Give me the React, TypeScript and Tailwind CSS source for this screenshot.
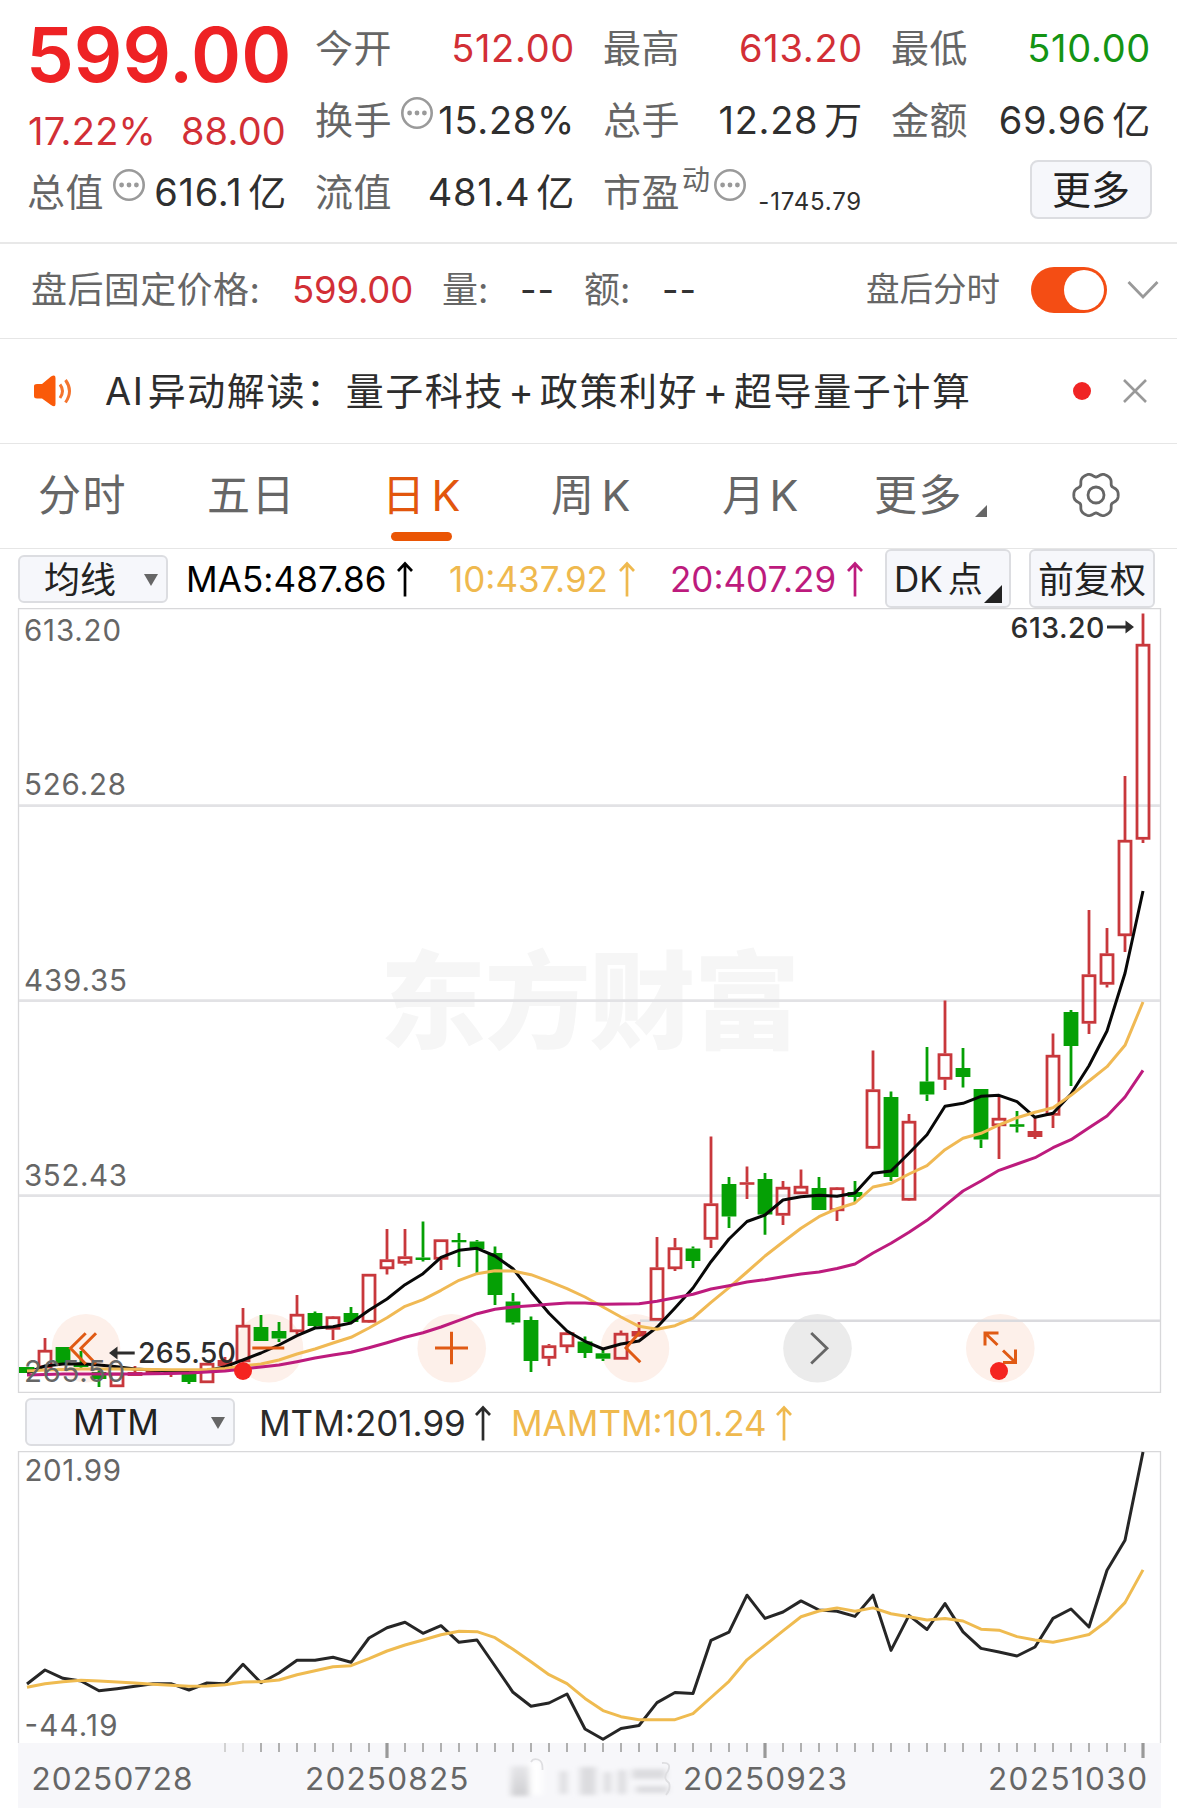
import React from "react";

const X0 = 27;
const STEP = 18;

type Candle = [kind: "r" | "g" | "f", high: number, top: number, bottom: number, low: number];

/* r = hollow rising bar, f = solid rising bar, g = falling bar */
const candles: Candle[] = [
  ["g", 1367, 1367, 1373, 1373],
  ["r", 1338, 1350, 1368, 1368],
  ["g", 1347, 1347, 1364, 1364],
  ["g", 1351, 1364, 1367, 1368],
  ["g", 1369, 1372, 1379, 1387],
  ["r", 1373, 1373, 1387, 1387],
  ["f", 1366, 1372, 1376, 1376],
  ["f", 1371, 1371, 1374, 1374],
  ["f", 1370, 1371, 1373, 1377],
  ["g", 1372, 1373, 1382, 1384],
  ["r", 1363, 1363, 1383, 1383],
  ["f", 1357, 1360, 1366, 1367],
  ["r", 1308, 1325, 1362, 1362],
  ["g", 1315, 1327, 1341, 1341],
  ["g", 1322, 1331, 1338.5, 1342],
  ["r", 1295, 1314, 1332, 1334],
  ["g", 1311.5, 1313, 1326, 1327],
  ["r", 1316, 1316.5, 1329.5, 1340],
  ["g", 1307, 1313, 1322, 1323],
  ["r", 1274, 1274, 1322.5, 1323],
  ["r", 1229, 1259.5, 1269, 1274.5],
  ["r", 1229, 1256.5, 1263.5, 1265.5],
  ["g", 1221.5, 1257.5, 1260, 1261.5],
  ["r", 1239.5, 1239.5, 1259.5, 1270],
  ["g", 1233, 1240, 1242.3, 1267],
  ["g", 1240, 1241.5, 1249, 1273],
  ["g", 1246.5, 1253, 1295, 1305],
  ["g", 1293, 1301.5, 1322.5, 1324.5],
  ["g", 1316.5, 1320, 1361, 1372],
  ["r", 1344, 1345.5, 1358.5, 1366],
  ["r", 1331.5, 1332.5, 1347, 1353],
  ["g", 1336.5, 1341.5, 1353, 1358],
  ["g", 1349, 1353.3, 1358.7, 1361],
  ["r", 1330.5, 1333, 1359.5, 1359.5],
  ["f", 1322, 1331, 1336.5, 1337],
  ["r", 1237, 1267.5, 1320.5, 1320.5],
  ["r", 1238, 1247.5, 1269, 1271],
  ["g", 1246.5, 1248.5, 1261, 1268],
  ["r", 1136.5, 1203.5, 1239.5, 1248],
  ["g", 1177, 1184, 1216.5, 1228],
  ["f", 1166.5, 1182.2, 1184.8, 1199],
  ["g", 1173, 1179, 1214.5, 1234.7],
  ["r", 1181, 1187, 1215.5, 1225],
  ["r", 1169.5, 1186, 1194, 1194],
  ["g", 1177, 1188, 1210, 1210],
  ["r", 1187, 1187.5, 1211, 1221],
  ["g", 1181, 1192, 1197, 1202],
  ["r", 1050.5, 1089.5, 1148.5, 1149],
  ["g", 1091.5, 1097, 1177, 1181],
  ["r", 1114, 1121, 1200.5, 1201],
  ["g", 1047, 1081.5, 1094.5, 1101],
  ["r", 1000.5, 1053.5, 1079.5, 1090],
  ["g", 1048, 1068, 1077, 1087.5],
  ["g", 1089, 1089, 1139.5, 1148],
  ["r", 1097, 1118, 1126, 1159],
  ["g", 1111, 1124.2, 1126.8, 1132.5],
  ["f", 1118, 1131, 1137, 1139],
  ["r", 1033.5, 1055, 1115.5, 1128],
  ["g", 1010, 1012, 1046, 1086],
  ["r", 910, 974.5, 1023.5, 1034],
  ["r", 928, 953.5, 984.5, 987.5],
  ["r", 776, 840, 936, 952],
  ["r", 613.5, 644, 839.5, 843],
];

const ma5 = [
  1373, 1366, 1364, 1363.7, 1365, 1366.7, 1369, 1370, 1371, 1372, 1370.7, 1366.7, 1360, 1353, 1345, 1335.7, 1328, 1326.7,
  1323, 1310.3, 1299, 1284.7, 1273.7, 1257.3, 1250.3, 1248.3, 1256, 1268.7, 1291.7, 1313.3, 1331, 1341.3, 1349, 1344,
  1341, 1327.3, 1308, 1288, 1261.7, 1239, 1221.5, 1215, 1200, 1196.7, 1195.3, 1196.3, 1193, 1173.3, 1171, 1153.3, 1134.7,
  1106.3, 1103.3, 1096.3, 1095.3, 1101.7, 1117.3, 1113.3, 1094, 1065.7, 1031, 973.3, 891,
];
const ma10 = [
  1371, 1370, 1369.5, 1369, 1369, 1369, 1369.3, 1369.5, 1369.7, 1369.7, 1369.5, 1368.5, 1365.7, 1364, 1360, 1354, 1349,
  1343, 1337.3, 1328, 1317.7, 1306.3, 1299.7, 1290.3, 1280.3, 1273.7, 1270.7, 1271, 1274.7, 1281.3, 1288.7, 1297, 1307,
  1317, 1326.3, 1329.3, 1325.7, 1318, 1302.3, 1287.7, 1272, 1256, 1242, 1228.3, 1216.7, 1208.7, 1203, 1187, 1183.3, 1174,
  1165.7, 1149.7, 1138.3, 1133.3, 1125, 1117.7, 1112.3, 1107.7, 1095.3, 1081, 1066.7, 1045.3, 1002,
];
const ma20 = [
  1375, 1374.5, 1374, 1374, 1374, 1374, 1374, 1373.7, 1373.5, 1373, 1372, 1371, 1369, 1367, 1365, 1361.7, 1358, 1355,
  1352.3, 1347.7, 1342.7, 1337.3, 1332.7, 1327, 1320.3, 1313.7, 1309.3, 1307, 1305.7, 1304.3, 1303, 1303, 1304.3, 1304,
  1303.7, 1301.3, 1297.7, 1294.3, 1289, 1285.7, 1282, 1279.7, 1276.7, 1274, 1272, 1268.5, 1264, 1253, 1243.3, 1232.3,
  1220.3, 1205.7, 1191, 1181, 1170.3, 1164, 1157.7, 1147.7, 1139.7, 1127.7, 1116, 1097, 1070.3,
];
const mtm = [
  1684, 1670, 1678.3, 1681, 1690.7, 1688.7, 1686.3, 1683.7, 1683.7, 1690, 1683, 1683.7, 1664.3, 1682.7, 1673, 1660.3,
  1660.3, 1657.3, 1662.3, 1638, 1627.7, 1622.3, 1633.3, 1625.7, 1642.3, 1640, 1666, 1692.3, 1706.3, 1703, 1694, 1729,
  1739.3, 1728.5, 1725.5, 1702.6, 1692.5, 1693.5, 1640.3, 1632.2, 1595.2, 1618.4, 1612, 1600.9, 1610, 1611.3, 1616.4,
  1595.2, 1650.4, 1615.4, 1629.5, 1603.6, 1631.9, 1648.4, 1652, 1656, 1647, 1618.4, 1609, 1627, 1570.2, 1540.3, 1452,
];
const mamtm = [
  1687.3, 1683.7, 1681.7, 1680.3, 1681, 1682, 1683, 1684.3, 1685.3, 1686.3, 1686, 1684.7, 1682, 1681.7, 1680, 1674.7,
  1670.7, 1666.7, 1665.7, 1658.7, 1651, 1645, 1640, 1634.7, 1631.3, 1631.7, 1637.7, 1649.3, 1661.7, 1674.7, 1683.7,
  1698.4, 1710.6, 1716.7, 1719.7, 1719.7, 1719.7, 1713.7, 1697.5, 1681.3, 1659.8, 1645.3, 1630.8, 1616.7, 1611, 1607.9,
  1611.3, 1607.9, 1613.7, 1616.7, 1620, 1618.4, 1621, 1629.2, 1630.2, 1636.6, 1640, 1642.3, 1638.6, 1634.5, 1621, 1602.6,
  1569.9,
];

const line = (ys: number[]) => ys.map((y, i) => `${X0 + i * STEP},${y}`).join(" ");

function Dots() {
  return (
    <svg className="size-8 shrink-0" viewBox="0 0 32 32" fill="none">
      <circle cx="16" cy="16" r="14.7" stroke="#9a9a9a" strokeWidth="2.6" />
      <circle cx="8.6" cy="16" r="2.4" fill="#9a9a9a" />
      <circle cx="16" cy="16" r="2.4" fill="#9a9a9a" />
      <circle cx="23.4" cy="16" r="2.4" fill="#9a9a9a" />
    </svg>
  );
}

function Up() {
  return (
    <svg className="mb-px h-9 w-4 shrink-0" viewBox="0 0 16 36" fill="none" stroke="currentColor" strokeWidth="2.7">
      <path d="M8 35.5V2.5M1 10L8 2.5L15 10" />
    </svg>
  );
}

function Gear() {
  const pts: string[] = [];
  for (let a = 0; a < 360; a += 3) {
    const t = (a * Math.PI) / 180;
    const r = 20.6 + 2.1 * Math.cos(6 * t) - 0.5 * Math.cos(12 * t);
    pts.push(`${(25 + r * Math.cos(t)).toFixed(2)},${(25 + r * Math.sin(t)).toFixed(2)}`);
  }
  return (
    <svg className="size-[50px]" viewBox="0 0 50 50" fill="none" stroke="#666" strokeWidth="2.8" strokeLinejoin="round">
      <polygon points={pts.join(" ")} />
      <circle cx="25" cy="25" r="8" />
    </svg>
  );
}

type FieldProps = { label: string; value: string; unit?: string; tone?: string; icon?: boolean };

function Field({ label, value, unit, tone = "", icon }: FieldProps) {
  return (
    <div className="flex h-[72px] items-center">
      <span className="-ml-px whitespace-nowrap tracking-[0.5px] text-[#666]">{label}</span>
      {icon && (
        <span className="-mr-3 -mt-3.5 ml-[9px]">
          <Dots />
        </span>
      )}
      <span className={"-mr-px ml-auto whitespace-nowrap tracking-[0.7px] " + tone}>
        {value}
        {unit && <span className="ml-1.5">{unit}</span>}
      </span>
    </div>
  );
}

function Header() {
  return (
    <header className="grid h-[244px] grid-cols-[258px_258px_258px_258px] grid-rows-[72px_72px_72px] gap-x-[30px] border-b-2 border-[#e8e8e8] pl-[28px] pt-3 text-[38px] leading-none text-[#2f2f2f]">
      <div className="row-span-2">
        <div className="-ml-0.5 flex h-[84px] items-center whitespace-nowrap text-[76px] font-semibold text-[#ee2224]">599.00</div>
        <div className="mt-[5px] flex h-[60px] items-center justify-between whitespace-nowrap text-[#d22f36]">
          <span className="tracking-[0.2px]">17.22%</span>
          <span className="tracking-[0.2px]">88.00</span>
        </div>
      </div>
      <Field label="今开" value="512.00" tone="text-[#d22f36]" />
      <Field label="最高" value="613.20" tone="text-[#d22f36]" />
      <Field label="最低" value="510.00" tone="text-[#149414]" />
      <Field label="换手" value="15.28%" icon />
      <Field label="总手" value="12.28" unit="万" />
      <Field label="金额" value="69.96" unit="亿" />
      <Field label="总值" value="616.1" unit="亿" icon />
      <Field label="流值" value="481.4" unit="亿" />
      <div className="flex h-[72px] items-center whitespace-nowrap">
        <span className="-ml-px tracking-[0.5px] text-[#666]">市盈</span>
        <span className="-mt-6 ml-0.5 mr-[4px] text-[28px] text-[#666]">动</span>
        <span className="-mt-3.5">
          <Dots />
        </span>
        <span className="ml-auto mt-5 text-2xl leading-none tracking-[0.8px]">-1745.79</span>
      </div>
      <div className="flex h-[72px] items-center justify-end">
        <button className="-mr-0.5 -mt-1.5 h-[59px] w-[122px] rounded-lg border-2 border-[#dcdde1] bg-[#f6f7fb] text-[39px] leading-none text-[#222]">更多</button>
      </div>
    </header>
  );
}

function AfterHours() {
  return (
    <section className="flex h-[95px] items-center whitespace-nowrap border-b border-[#e6e6e6] pb-[2px] pl-[31px] text-4xl leading-none text-[#666]">
      <span className="w-[261px] tracking-[0.4px]">盘后固定价格:</span>
      <span className="w-[150px] text-[36.500px] leading-none tracking-[-0.2px] text-[#d22f36]">599.00</span>
      <span className="w-[78px]">量:</span>
      <span className="w-[64px] tracking-[1px] text-[#333]">--</span>
      <span className="w-[78px]">额:</span>
      <span className="tracking-[1px] text-[#333]">--</span>
      <div className="ml-auto mr-[18px] flex items-center">
        <span className="text-[33.500px] leading-none">盘后分时</span>
        <span className="ml-[31px] flex h-[46px] w-[76px] items-center justify-end rounded-full bg-[#f44d14] pr-[3px]">
          <span className="size-10 rounded-full bg-white" />
        </span>
        <svg className="ml-5 h-5 w-8" viewBox="0 0 32 20" fill="none" stroke="#999" strokeWidth="2.8">
          <path d="M1.5 2L16 17L30.500 2" />
        </svg>
      </div>
    </section>
  );
}

function Notice() {
  return (
    <section className="flex h-[105px] items-center border-b border-[#e6e6e6] pb-px pl-[33px] pr-[30px]">
      <svg className="h-9 w-10" viewBox="0 0 40 36" fill="none">
        <path d="M1 13Q1 11 4 11H9L18 3.500Q22.500 1 22.500 5V31Q22.500 35 18 32L9 25.500H4Q1 25.500 1 23Z" fill="#fa5a0a" />
        <path d="M27 11.500Q32 18 27 25M32.500 7Q40.500 18 32.500 29.500" stroke="#f4742e" strokeWidth="3" />
      </svg>
      <p className="ml-8 whitespace-nowrap text-[38px] leading-none tracking-[1.6px] text-[#2d2d2d]">
        <span className="mr-[3px]">AI</span>异动解读：量子科技<span className="mx-[4.500px]">+</span>政策利好
        <span className="mx-[4.500px]">+</span>超导量子计算
      </p>
      <span className="ml-auto size-[18px] rounded-full bg-[#f02424]" />
      <svg className="ml-8 size-6" viewBox="0 0 24 24" stroke="#999" strokeWidth="2.6">
        <path d="M1 1L23 23M23 1L1 23" />
      </svg>
    </section>
  );
}

function Tabs() {
  return (
    <nav className="flex h-[105px] items-center whitespace-nowrap border-b border-[#e6e6e6] pb-0.5 pl-[38px] text-[43px] leading-none tracking-[1.5px] text-[#666]">
      <span className="w-[169px]">分时</span>
      <span className="w-[175px]">五日</span>
      <span className="relative w-[169px] text-[#e2560d]">
        日<span className="ml-[5px]">K</span>
        <span className="absolute left-[9px] top-[58px] h-[9px] w-[61px] rounded-full bg-[#ea5504]" />
      </span>
      <span className="w-[171px]">
        周<span className="ml-1.5">K</span>
      </span>
      <span className="w-[152px]">
        月<span className="ml-[3px]">K</span>
      </span>
      <span>更多</span>
      <svg className="ml-3 mt-8 size-3" viewBox="0 0 12 12">
        <path d="M12 0V12H0Z" fill="#666" />
      </svg>
      <span className="ml-[84px]">
        <Gear />
      </span>
    </nav>
  );
}

function MaBar() {
  return (
    <div className="flex h-[59px] items-center whitespace-nowrap pl-[18px] text-[35px] leading-none">
      <div className="flex h-12 w-[150px] items-center justify-between rounded-md border-2 border-[#dcdde1] bg-[#f6f7fb] pl-6 pr-2 pt-0.5 text-4xl leading-none text-[#222]">
        均线
        <svg className="h-3 w-3.5" viewBox="0 0 14 12">
          <path d="M0 0H14L7 12Z" fill="#666" />
        </svg>
      </div>
      <div className="ml-[18px] flex w-[263px] items-center gap-[11px] pt-0.5 tracking-[0.1px] text-black">
        MA5:487.86 <Up />
      </div>
      <div className="flex w-[221px] items-center gap-[11px] pt-0.5 text-[#efb94e]">
        10:437.92 <Up />
      </div>
      <div className="flex w-[215px] items-center gap-[11px] pt-0.5 text-[#bd1b7d]">
        20:407.29 <Up />
      </div>
      <div className="relative flex h-[59px] w-[126px] items-center rounded-md border-2 border-[#dcdde1] bg-[#f6f7fb] pl-[7px] pt-0.5 text-[#222]">
        DK<span className="ml-[5px]">点</span>
        <svg className="absolute bottom-[3px] right-[7px] size-[18px]" viewBox="0 0 18 18">
          <path d="M18 0V18H0Z" fill="#222" />
        </svg>
      </div>
      <div className="ml-[18px] flex h-[59px] w-[126px] items-center justify-center rounded-md border-2 border-[#dcdde1] bg-[#f6f7fb] pt-0.5 text-4xl leading-none text-[#222]">前复权</div>
    </div>
  );
}

function CandleShape({ c, i }: { c: Candle; i: number }) {
  const [kind, high, top, bottom, low] = c;
  const x = X0 + i * STEP;
  const color = kind === "g" ? "#05a005" : "#c8383c";
  const left = i === 0 ? 19 : x - 7.4;
  return (
    <g stroke={color} strokeWidth="2.8">
      <path d={`M${x} ${high}V${top}M${x} ${bottom}V${low}`} />
      {kind === "r" ? (
        <rect x={x - 6} y={top + 1.2} width="12" height={bottom - top - 2.4} fill="none" />
      ) : (
        <rect x={left} y={top} width={x + 7.4 - left} height={bottom - top} fill={color} stroke="none" />
      )}
    </g>
  );
}

function KChart() {
  return (
    <svg className="block h-[785px] w-full" viewBox="0 608 1177 785" fontFamily="Inter, sans-serif" fill="none">
      <path d="M18.500 608.500H1160.500V1392.300H18.500Z" stroke="#d8d8da" strokeWidth="1.3" />
      <text x="380" y="1040" textLength="420" fontFamily="'Noto Sans CJK SC', sans-serif" fontSize="106" fontWeight="900" fill="#f6f6f6">
        东方财富
      </text>
      <g stroke="#e2e2e5" strokeWidth="2.8">
        <path d="M19 805.700H1160M19 1000.700H1160M19 1195.700H1160" />
      </g>
      <g fill="#fdf0ea">
        <circle cx="86" cy="1348.300" r="34.300" />
        <circle cx="269" cy="1348.300" r="34.300" />
        <circle cx="451.700" cy="1348.300" r="34.300" />
        <circle cx="635" cy="1348.300" r="34.300" />
        <circle cx="817.500" cy="1348.300" r="34.300" fill="#ebebeb" />
        <circle cx="1000.300" cy="1348.300" r="34.300" />
      </g>
      <path d="M640 1320.700H1160" stroke="#dadade" strokeWidth="2.400" />
      {candles.map((c, i) => (
        <CandleShape key={i} c={c} i={i} />
      ))}
      <g strokeWidth="3" strokeLinejoin="round">
        <polyline points={line(ma5)} stroke="#080808" />
        <polyline points={line(ma10)} stroke="#f0b954" />
        <polyline points={line(ma20)} stroke="#bd1b7d" />
      </g>
      <g stroke="#e05a14" strokeWidth="3">
        <path d="M85.700 1333.300L70.500 1348.300L85.700 1364M96 1333.300L81 1348.300L96 1364" />
        <path d="M252.300 1348H284.300" />
        <path d="M435 1348H468M451.500 1331.700V1364.300" />
        <path d="M640 1332L626 1348L640.300 1362.300" />
        <path d="M998.500 1333H985V1345.500M985 1333L997.500 1345M1003 1362.500H1015.500V1349.500M1003 1350.500L1015.500 1362.500" />
      </g>
      <path d="M811.200 1333L827 1348.300L811.200 1363.500" stroke="#666" strokeWidth="2.800" />
      <circle cx="243" cy="1371" r="9" fill="#f52420" />
      <circle cx="999" cy="1371" r="9" fill="#f52420" />
      <g fill="#666" fontSize="29.500">
        <text x="24" y="641" textLength="97">613.20</text>
        <text x="24" y="795" textLength="102">526.28</text>
        <text x="24" y="991" textLength="103">439.35</text>
        <text x="24" y="1186" textLength="103">352.43</text>
        <text x="24" y="1382" textLength="101">265.50</text>
      </g>
      <g fill="#2d2d2d" fontSize="28.500" fontWeight="500">
        <text x="138" y="1363" textLength="98">265.50</text>
        <text x="1010.500" y="637.500" textLength="94">613.20</text>
      </g>
      <path d="M116 1353H134.700M1107 627H1126" stroke="#2d2d2d" strokeWidth="2.800" />
      <path d="M109 1353L117.500 1346.500V1359.500ZM1134 627L1125.500 620.500V633.500Z" fill="#2d2d2d" />
    </svg>
  );
}

function MtmBar() {
  return (
    <div className="flex h-[58px] items-center whitespace-nowrap pl-[25px] text-[35px] leading-none">
      <div className="flex h-12 w-[210px] items-center justify-between rounded-md border-2 border-[#dcdde1] bg-[#f6f7fb] pl-[46px] pr-2 pt-px text-[#222]">
        MTM
        <svg className="h-3 w-3.5" viewBox="0 0 14 12">
          <path d="M0 0H14L7 12Z" fill="#666" />
        </svg>
      </div>
      <div className="ml-6 flex w-[252px] items-center gap-[9px] pt-0.5 text-[#2b2b2b]">
        MTM:201.99 <Up />
      </div>
      <div className="flex items-center gap-[9px] pt-0.5 text-[#efb94e]">
        MAMTM:101.24 <Up />
      </div>
    </div>
  );
}

function MtmChart() {
  return (
    <svg className="block h-[357px] w-full" viewBox="0 1451 1177 357" fontFamily="Inter, sans-serif" fill="none">
      <defs>
        <filter id="soft" x="-10%" y="-30%" width="120%" height="160%">
          <feGaussianBlur stdDeviation="3 2" />
        </filter>
        <linearGradient id="fade" x1="0" y1="0" x2="0" y2="1">
          <stop offset="0" stopColor="#e6e6e9" />
          <stop offset="1" stopColor="#cfcfd2" />
        </linearGradient>
      </defs>
      <path d="M18.500 1743V1451.500H1160.500V1743" stroke="#d8d8da" strokeWidth="1.300" />
      <rect x="18" y="1743" width="1143" height="65" fill="#f7f7fa" />
      {candles.map((_, i) => {
        if (i < 11) return null;
        const major = i === 20 || i === 41 || i === 62;
        return (
          <path
            key={i}
            d={`M${X0 + i * STEP} 1743V${major ? 1758 : 1752}`}
            stroke={major ? "#999" : i < 13 ? "#d2d2d2" : "#b0b0b0"}
            strokeWidth={major ? 3.2 : 2}
          />
        );
      })}
      <g filter="url(#soft)">
        <rect x="511" y="1766" width="18" height="30" fill="url(#fade)" />
        <path d="M530 1761H542V1795H530Z" fill="#fff" />
        <g fill="#dcdcdf">
          <path d="M560 1771H567V1794H560ZM580 1767H596V1795H580ZM604 1772H611V1793H604ZM618 1770H626V1794H618Z" />
          <path d="M632 1769H666V1779H632ZM636 1786H668V1793H636Z" />
        </g>
      </g>
      <path d="M531 1762Q533 1758 538 1759.500Q543 1761 542.500 1770M662 1763Q672 1762 668 1771Q662 1778 669 1783Q671 1789 666 1795" stroke="#dedee1" strokeWidth="1.800" />
      <g strokeWidth="3" strokeLinejoin="round">
        <polyline points={line(mtm)} stroke="#262626" />
        <polyline points={line(mamtm)} stroke="#efbb50" />
      </g>
      <g fill="#666" fontSize="29.500">
        <text x="24.500" y="1481" textLength="96.500">201.99</text>
        <text x="24.500" y="1736" textLength="93">-44.19</text>
      </g>
      <g fill="#666" fontSize="31.500">
        <text x="31.500" y="1790" textLength="161">20250728</text>
        <text x="305" y="1790" textLength="163.500">20250825</text>
        <text x="683" y="1790" textLength="164">20250923</text>
        <text x="988" y="1790" textLength="159">20251030</text>
      </g>
    </svg>
  );
}

export default function App() {
  return (
    <main className="h-[1808px] w-[1177px] overflow-hidden bg-white font-['Inter','Noto_Sans_CJK_SC',sans-serif]">
      <Header />
      <AfterHours />
      <Notice />
      <Tabs />
      <MaBar />
      <KChart />
      <MtmBar />
      <MtmChart />
    </main>
  );
}
